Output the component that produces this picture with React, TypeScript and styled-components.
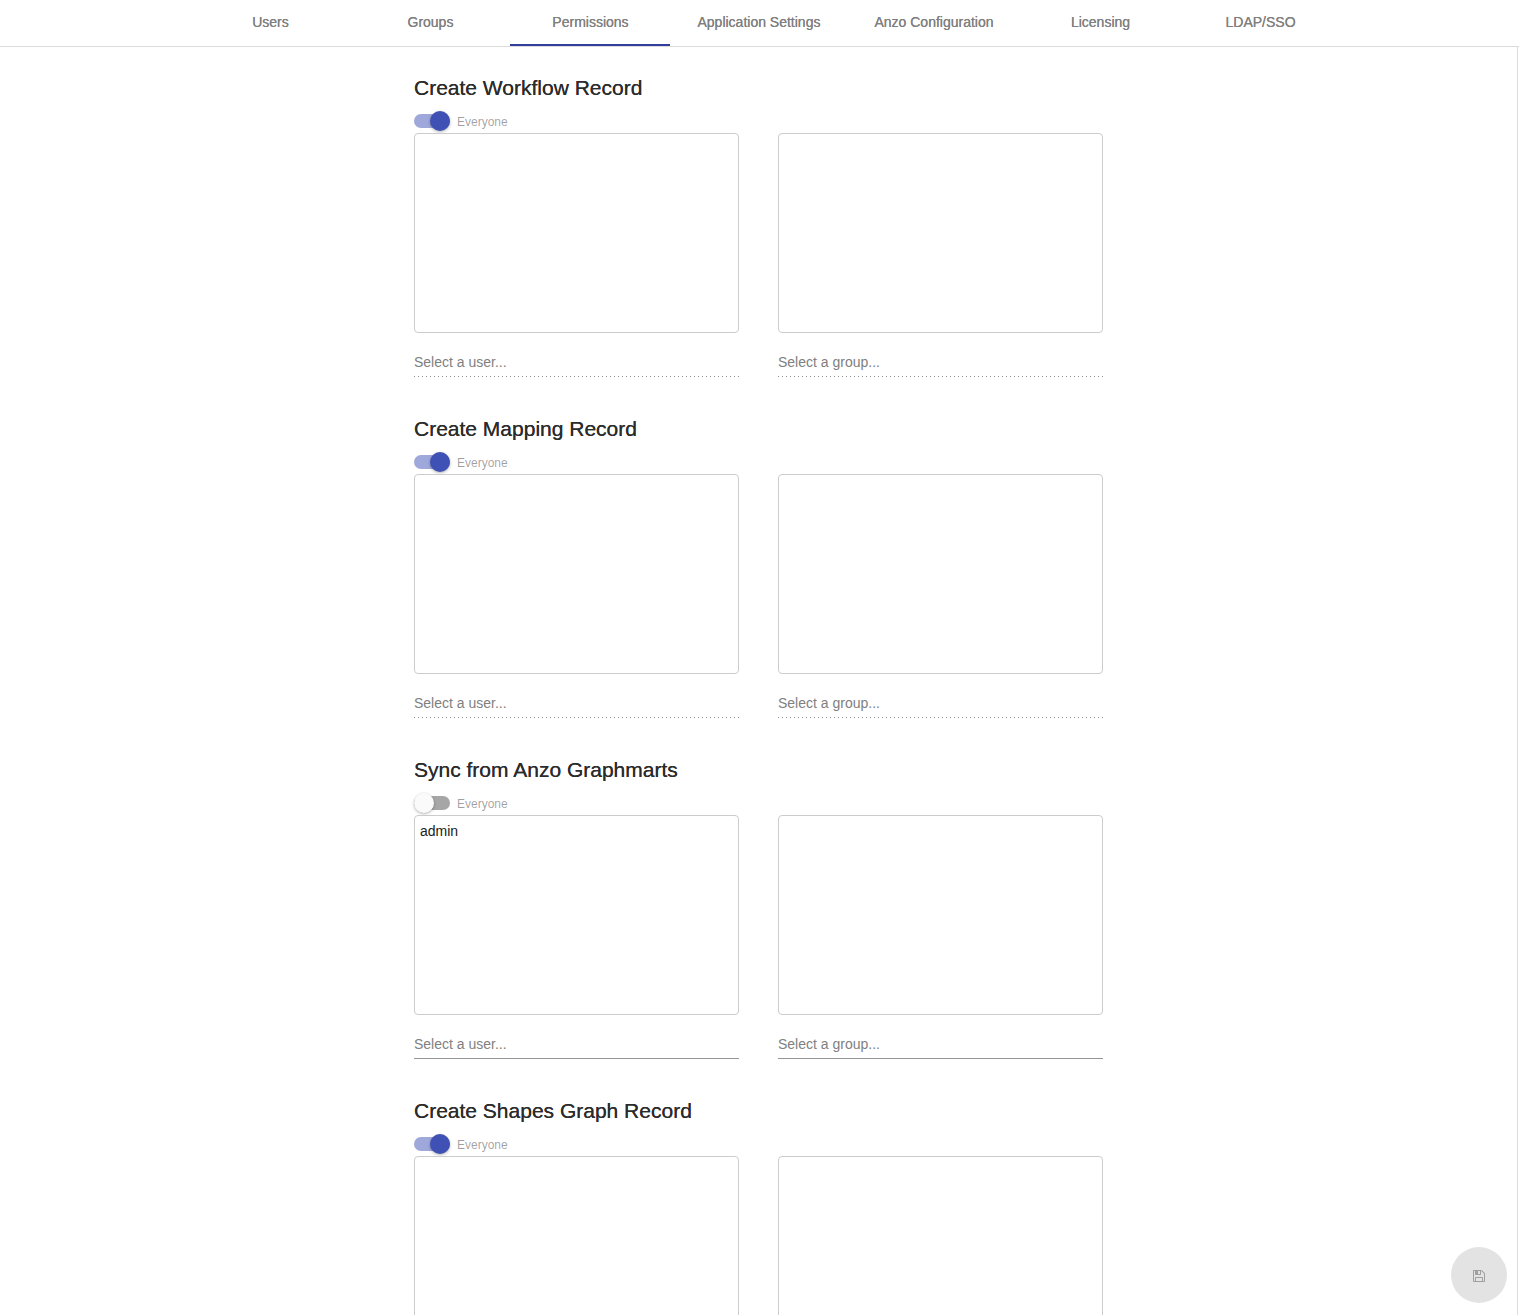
import React, { useState } from 'react';
import styled, { createGlobalStyle } from 'styled-components';

const GlobalStyle = createGlobalStyle`
  *, *::before, *::after { box-sizing: border-box; }
  body {
    margin: 0;
    background: #fff;
    color: #212121;
    font-family: "Helvetica Neue", "Liberation Sans", Arial, sans-serif;
    font-size: 14px;
  }
`;

const Shell = styled.div`
  display: flex;
  flex-direction: column;
  height: 100vh;
  overflow: hidden;
`;

const TabBar = styled.nav`
  display: flex;
  flex: none;
  justify-content: center;
  height: 47px;
  padding-left: 12px;
  border-bottom: 1px solid #dcdcdc;
`;

const Tab = styled.a<{ $active: boolean }>`
  display: flex;
  align-items: center;
  justify-content: center;
  min-width: 160px;
  padding: 0 27px;
  border-bottom: 2px solid ${(p) => (p.$active ? '#303f9f' : 'transparent')};
  color: #808080;
  font-size: 14px;
  line-height: 20px;
  white-space: nowrap;
  text-decoration: none;
  text-shadow: 0 0 0 #808080;
`;

const Panel = styled.main`
  flex: 1;
  min-height: 0;
  margin-right: 1px;
  overflow-y: auto;
  scrollbar-width: none;
  border-right: 1px solid #dcdcdc;
`;

const Content = styled.div`
  max-width: 729px;
  margin: 0 auto;
  padding: 25px 20px;
`;

const Section = styled.section`
  margin-bottom: 36px;
`;

const Title = styled.h2`
  margin: 0 0 5px;
  color: #2c2c2c;
  font-size: 21px;
  font-weight: 400;
  line-height: 32px;
  text-shadow: 0 0 0 #2c2c2c;
`;

const ToggleRow = styled.label`
  display: flex;
  align-items: center;
  gap: 7px;
  width: max-content;
  height: 24px;
  color: rgba(0, 0, 0, 0.38);
  font-size: 12px;
  line-height: 16px;
`;

const ToggleText = styled.span`
  padding-top: 2px;
`;

const Switch = styled.input`
  appearance: none;
  display: flex;
  align-items: center;
  width: 36px;
  height: 14px;
  margin: 0;
  border-radius: 7px;
  background: #a6a6a6;

  &::before {
    content: "";
    flex: none;
    width: 20px;
    height: 20px;
    border-radius: 50%;
    background: #fafafa;
    box-shadow: 0 1px 3px rgba(0, 0, 0, 0.3);
  }

  &:checked {
    justify-content: flex-end;
    background: #9fa8da;
  }

  &:checked::before {
    background: #3f51b5;
  }
`;

const Columns = styled.div`
  display: grid;
  grid-template-columns: 1fr 1fr;
  gap: 39px;
`;

const List = styled.ul`
  height: 200px;
  margin: 0;
  padding: 5px;
  border: 1px solid #ccc;
  border-radius: 4px;
  list-style: none;
`;

const ListItem = styled.li`
  line-height: 20px;
`;

const Picker = styled.input`
  display: block;
  width: 100%;
  height: 44px;
  padding: 15px 0 0;
  border: 0;
  border-bottom: 1px solid #949494;
  border-radius: 0;
  outline: 0;
  background: transparent;
  color: inherit;
  font: inherit;

  &::placeholder {
    color: #808080;
    opacity: 1;
  }

  &:disabled {
    border-bottom: 0;
    padding-bottom: 2px;
    background: linear-gradient(to right, #8f8f8f 0 1px, transparent 1px) left bottom / 4px 1px repeat-x;
  }
`;

const SaveButton = styled.button`
  position: fixed;
  right: 12px;
  bottom: 12px;
  display: flex;
  align-items: center;
  justify-content: center;
  width: 56px;
  height: 56px;
  padding: 2px 0 0;
  border: 0;
  border-radius: 50%;
  background: #e3e3e3;
  color: #a0a0a0;
`;

const SaveIcon = () => (
  <svg width="14" height="14" viewBox="0 0 1792 1792" fill="currentColor" aria-hidden="true">
    <path d="M512 1536h768v-384h-768v384zm896 0h128v-896q0-14-10-38.500t-20-34.500l-281-281q-10-10-34-20t-39-10v416q0 40-28 68t-68 28h-576q-40 0-68-28t-28-68v-416h-128v1280h128v-416q0-40 28-68t68-28h832q40 0 68 28t28 68v416zm-384-928v-320q0-13-9.500-22.500t-22.500-9.500h-192q-13 0-22.500 9.500t-9.500 22.500v320q0 13 9.500 22.500t22.500 9.500h192q13 0 22.500-9.500t9.500-22.500zm640 32v928q0 40-28 68t-68 28h-1344q-40 0-68-28t-28-68v-1344q0-40 28-68t68-28h928q40 0 88 20t76 48l280 280q28 28 48 76t20 88z" />
  </svg>
);

interface Permission {
  title: string;
  everyone: boolean;
  users: string[];
  groups: string[];
}

const tabs = [
  'Users',
  'Groups',
  'Permissions',
  'Application Settings',
  'Anzo Configuration',
  'Licensing',
  'LDAP/SSO',
];

const permissions: Permission[] = [
  { title: 'Create Workflow Record', everyone: true, users: [], groups: [] },
  { title: 'Create Mapping Record', everyone: true, users: [], groups: [] },
  { title: 'Sync from Anzo Graphmarts', everyone: false, users: ['admin'], groups: [] },
  { title: 'Create Shapes Graph Record', everyone: true, users: [], groups: [] },
];

const Members = ({ kind, names, disabled }: { kind: string; names: string[]; disabled: boolean }) => (
  <div>
    <List>
      {names.map((name) => (
        <ListItem key={name}>{name}</ListItem>
      ))}
    </List>
    <Picker
      type="text"
      placeholder={`Select a ${kind}...`}
      aria-label={`Select a ${kind}`}
      disabled={disabled}
    />
  </div>
);

const PermissionSection = ({ permission }: { permission: Permission }) => {
  const [everyone, setEveryone] = useState(permission.everyone);
  return (
    <Section>
      <Title>{permission.title}</Title>
      <ToggleRow>
        <Switch
          type="checkbox"
          role="switch"
          checked={everyone}
          onChange={(e) => setEveryone(e.target.checked)}
        />
        <ToggleText>Everyone</ToggleText>
      </ToggleRow>
      <Columns>
        <Members kind="user" names={permission.users} disabled={everyone} />
        <Members kind="group" names={permission.groups} disabled={everyone} />
      </Columns>
    </Section>
  );
};

export default function App() {
  const [active, setActive] = useState('Permissions');
  return (
    <Shell>
      <GlobalStyle />
      <TabBar>
        {tabs.map((tab) => (
          <Tab
            key={tab}
            href="#"
            $active={tab === active}
            aria-current={tab === active ? 'page' : undefined}
            onClick={() => setActive(tab)}
          >
            {tab}
          </Tab>
        ))}
      </TabBar>
      <Panel>
        <Content>
          {permissions.map((permission) => (
            <PermissionSection key={permission.title} permission={permission} />
          ))}
        </Content>
      </Panel>
      <SaveButton type="button" aria-label="Save" disabled>
        <SaveIcon />
      </SaveButton>
    </Shell>
  );
}
